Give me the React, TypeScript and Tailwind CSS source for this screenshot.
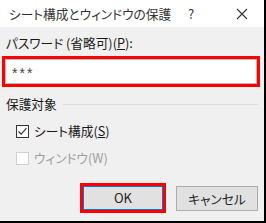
import React from "react";

export default function App() {
  return (
    <div
      className="w-[266px] h-[223px] bg-[#f0f0f0] border-r-2 border-b-2 border-black flex flex-col text-[#1a1a1a] [font-feature-settings:'palt']"
      style={{ fontFamily: '"Noto Sans CJK JP", "Noto Sans", sans-serif' }}
    >
      <div className="h-[27px] bg-white flex items-center pl-[9px] pr-[14px] text-[12.7px] text-[#333]">
        <span className="flex-1 whitespace-nowrap">シート構成とウィンドウの保護</span>
        <span className="w-[10px] text-[13px] mr-[40px] text-center">?</span>
        <svg width="12" height="12" viewBox="0 0 12 12" className="mr-[2px]">
          <path d="M1 1 L11 11 M11 1 L1 11" stroke="#333" strokeWidth="1.1" />
        </svg>
      </div>
      <div className="flex flex-col pl-[2px] pr-[4px]">
        <div className="mt-[8px] ml-[4px] h-[16px] leading-[16px] text-[12.7px] whitespace-nowrap">
          パスワード (省略可)(<span className="underline">P</span>):
        </div>
        <div className="mt-[5px] h-[31px] border-[3px] border-[#ff0000]">
          <div
            className="h-full bg-white border border-[#b8b8b8] flex items-center pl-[6px] pt-[3px] text-[14px] tracking-[2px] text-[#444]"
            style={{ fontFamily: '"Liberation Sans", sans-serif' }}
          >
            ***
          </div>
        </div>
        <div className="mt-[9px] ml-[4px] h-[16px] flex items-center text-[12.7px]">
          <span className="whitespace-nowrap">保護対象</span>
          <div className="flex-1 h-px bg-[#dcdcdc] ml-[6px] mr-[2px]" />
        </div>
        <div className="mt-[11px] ml-[14px] h-[16px] flex items-center text-[12.7px]">
          <div className="w-[13px] h-[13px] border border-[#333] bg-white flex items-center justify-center">
            <svg width="11" height="11" viewBox="0 0 11 11">
              <path d="M1.5 5.5 L4.2 8.2 L9.5 2.2" stroke="#333" strokeWidth="1.2" fill="none" />
            </svg>
          </div>
          <span className="ml-[5px] whitespace-nowrap">
            シート構成(<span className="underline">S</span>)
          </span>
        </div>
        <div className="mt-[11px] ml-[14px] h-[16px] flex items-center text-[12.7px] text-[#a0a0a0]">
          <div className="w-[13px] h-[13px] border border-[#d0d0d0] bg-white" />
          <span className="ml-[5px] whitespace-nowrap">ウィンドウ(W)</span>
        </div>
        <div className="mt-[17px] flex justify-end items-start pr-[2px]">
          <div className="border-[3px] border-[#ff0000]">
            <div className="w-[80px] h-[24px] bg-[#e1e1e1] border border-[#0078d7] flex items-center justify-center text-[13px] text-[#222]">
              OK
            </div>
          </div>
          <div className="ml-[10px] mt-[3px] w-[82px] h-[25px] bg-[#e1e1e1] border border-[#adadad] flex items-center justify-center text-[12.7px] text-[#222]">
            キャンセル
          </div>
        </div>
      </div>
    </div>
  );
}
